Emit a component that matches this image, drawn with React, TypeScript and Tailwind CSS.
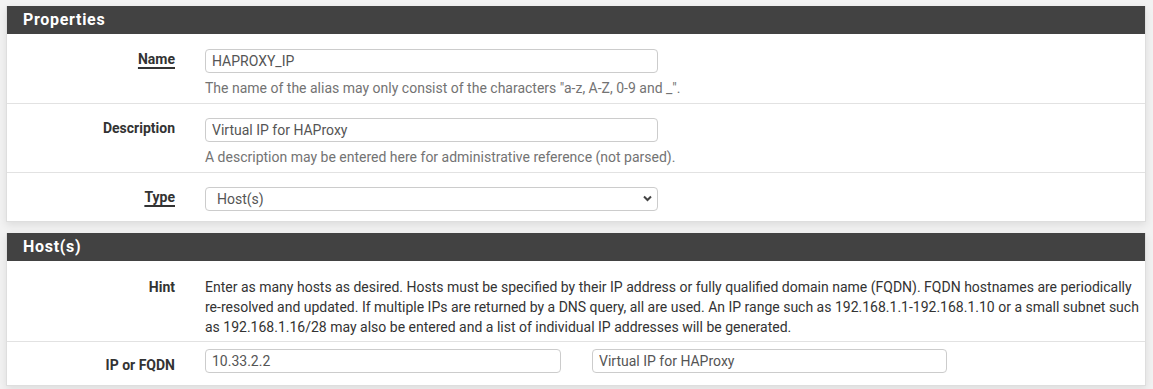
import { ReactNode } from "react";

function Panel({ title, children }: { title: string; children: ReactNode }) {
  return (
    <section className="w-[1140px] bg-white border-x border-b border-[#dedede] shadow-[0_3px_8px_rgba(0,0,0,0.09)]">
      <h2 className="h-[28px] bg-[#424242] px-[16px] text-[16px] font-bold leading-[28px] tracking-[0.7px] text-white">
        {title}
      </h2>
      {children}
    </section>
  );
}

function Label({ text, required, className = "" }: { text: string; required?: boolean; className?: string }) {
  return (
    <div className={`w-[168px] shrink-0 text-right text-[14px] font-bold leading-[20px] text-[#333] ${className}`}>
      <span className={required ? "underline underline-offset-[3px] decoration-[1.5px]" : ""}>{text}</span>
    </div>
  );
}

function TextInput({ value, width }: { value: string; width: string }) {
  return (
    <input
      readOnly
      defaultValue={value}
      className={`${width} h-[24px] rounded-[4px] border border-[#cccccc] bg-white px-[6px] text-[14px] leading-[20px] text-[#555] outline-none`}
    />
  );
}

export default function App() {
  return (
    <main className="min-h-screen bg-[#f2f2f2] px-[6px] pt-[6px] font-['Roboto',sans-serif]">
      {/* Properties */}
      <Panel title="Properties">
        <div className="flex border-b border-[#e2e2e2] pt-[15px] pb-[5px]">
          <Label text="Name" required />
          <div className="ml-[30px]">
            <TextInput value="HAPROXY_IP" width="w-[453px]" />
            <p className="mt-[5px] text-[14px] leading-[20px] text-[#737373]">
              The name of the alias may only consist of the characters "a-z, A-Z, 0-9 and _".
            </p>
          </div>
        </div>

        <div className="flex border-b border-[#e2e2e2] pt-[14px] pb-[5px]">
          <Label text="Description" />
          <div className="ml-[30px]">
            <TextInput value="Virtual IP for HAProxy" width="w-[453px]" />
            <p className="mt-[5px] text-[14px] leading-[20px] text-[#737373]">
              A description may be entered here for administrative reference (not parsed).
            </p>
          </div>
        </div>

        <div className="flex pt-[14px] pb-[10px]">
          <Label text="Type" required />
          <div className="relative ml-[30px] w-[453px]">
            <select
              defaultValue="host"
              className="h-[24px] w-full appearance-none rounded-[4px] border border-[#cccccc] bg-white pl-[11px] text-[14px] leading-[20px] text-[#555] outline-none"
            >
              <option value="host">Host(s)</option>
            </select>
            <svg
              className="pointer-events-none absolute right-[6px] top-[8px]"
              width="9"
              height="7"
              viewBox="0 0 9 7"
            >
              <path d="M1 1.5 L4.5 5 L8 1.5" fill="none" stroke="#444" strokeWidth="2" />
            </svg>
          </div>
        </div>
      </Panel>

      <div className="h-[11px]" />

      {/* Host(s) */}
      <Panel title="Host(s)">
        <div className="flex border-b border-[#e2e2e2] pt-[16px] pb-[4px]">
          <Label text="Hint" />
          <p className="ml-[30px] text-[14px] leading-[20px] text-[#333]">
            Enter as many hosts as desired. Hosts must be specified by their IP address or fully qualified domain name
            (FQDN). FQDN hostnames are periodically re-resolved and updated. If multiple IPs are returned by a DNS query,
            all are used. An IP range such as 192.168.1.1-192.168.1.10 or a small subnet such as 192.168.1.16/28 may also
            be entered and a list of individual IP addresses will be generated.
          </p>
        </div>

        <div className="flex pt-[7px] pb-[10px]">
          <Label text="IP or FQDN" className="pt-[6px]" />
          <div className="ml-[30px] flex gap-[31px]">
            <TextInput value="10.33.2.2" width="w-[356px]" />
            <TextInput value="Virtual IP for HAProxy" width="w-[355px]" />
          </div>
        </div>
      </Panel>
    </main>
  );
}
